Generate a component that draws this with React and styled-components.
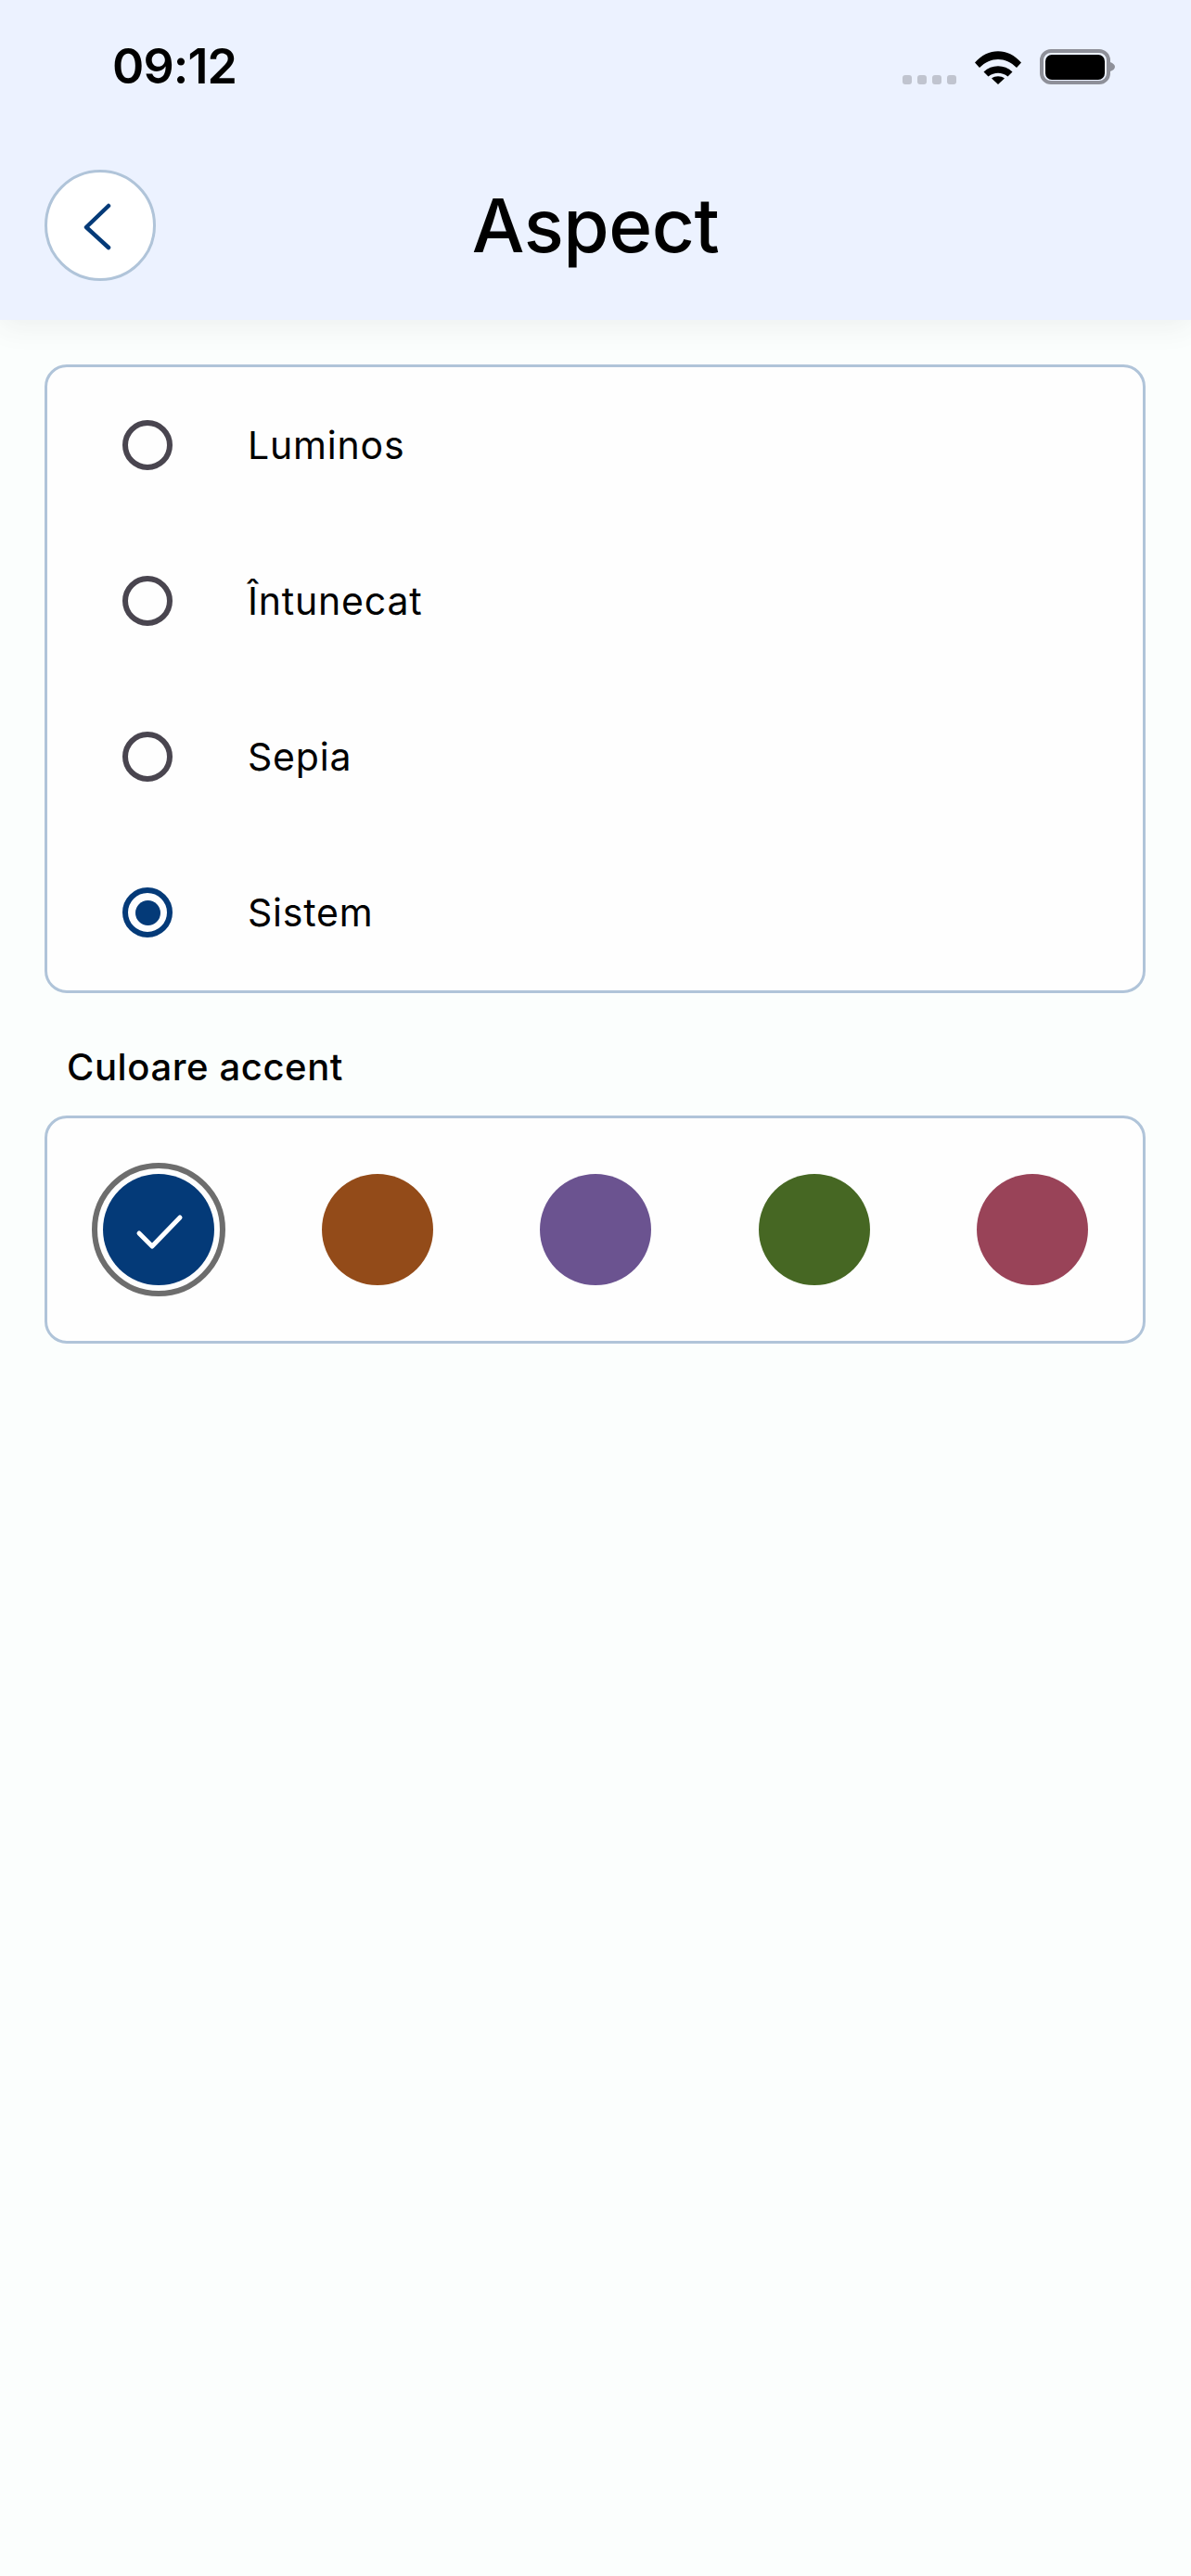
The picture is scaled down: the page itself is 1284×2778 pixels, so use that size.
import React from "react";
import styled, { createGlobalStyle } from "styled-components";

const GlobalStyle = createGlobalStyle`
  html, body {
    margin: 0;
    padding: 0;
    background: #fbfefd;
  }
  * {
    box-sizing: border-box;
  }
`;

const Page = styled.div`
  width: 1284px;
  height: 2778px;
  overflow: hidden;
  background: #fbfefd;
  color: #000;
  font-family: Inter, "Liberation Sans", sans-serif;
`;

const Header = styled.header`
  height: 345px;
  background: #ecf2ff;
  box-shadow: 0 6px 30px rgba(60, 70, 60, 0.08);
`;

const StatusBar = styled.div`
  height: 144px;
  padding: 44px 82px 0 121px;
  display: flex;
  justify-content: space-between;
`;

const Time = styled.span`
  font-size: 52px;
  line-height: 56px;
  font-weight: 600;
  letter-spacing: -0.9px;
`;

const StatusIcons = styled.div`
  height: 47px;
  padding-top: 9px;
  display: flex;
  align-items: flex-end;
  gap: 20px;
`;

const Signal = styled.div`
  display: flex;
  gap: 6px;
  span {
    width: 10px;
    height: 10px;
    border-radius: 3px;
    background: #c0c4cf;
  }
`;

const NavRow = styled.div`
  margin-top: 39px;
  padding: 0 48px;
  display: grid;
  grid-template-columns: 120px 1fr 120px;
  align-items: center;
`;

const BackButton = styled.button`
  width: 120px;
  height: 120px;
  padding: 0;
  border: 3px solid #b0c4d9;
  border-radius: 50%;
  background: #fff;
  display: flex;
  align-items: center;
  justify-content: center;
`;

const Title = styled.h1`
  margin: 0;
  text-align: center;
  font-size: 80px;
  line-height: 120px;
  font-weight: 500;
  letter-spacing: -0.5px;
`;

const Content = styled.main`
  padding: 48px 49px 0 48px;
`;

const Card = styled.section`
  border: 3px solid #b0c4d9;
  border-radius: 24px;
  background: #fefefe;
`;

const OptionRow = styled.label`
  height: 168px;
  padding-left: 81px;
  display: flex;
  align-items: center;
  gap: 81px;
`;

const Radio = styled.span`
  width: 54px;
  height: 54px;
  border-radius: 50%;
  border: 6px solid ${(p) => (p.$selected ? "#043a78" : "#49454f")};
  display: flex;
  align-items: center;
  justify-content: center;
  &::after {
    content: "";
    display: ${(p) => (p.$selected ? "block" : "none")};
    width: 27px;
    height: 27px;
    border-radius: 50%;
    background: #043a78;
  }
`;

const OptionLabel = styled.span`
  font-size: 41px;
  line-height: 50px;
  font-weight: 430;
  letter-spacing: 0.8px;
`;

const SectionLabel = styled.h2`
  margin: 55px 0 27px 24px;
  font-size: 40px;
  line-height: 50px;
  font-weight: 550;
  letter-spacing: 0.6px;
`;

const SwatchCard = styled(Card)`
  padding: 48px 47px 48px 48px;
  display: flex;
  justify-content: space-between;
`;

const SwatchSlot = styled.div`
  width: 144px;
  height: 144px;
  border-radius: 50%;
  border: 6px solid ${(p) => (p.$selected ? "#6d6d6d" : "transparent")};
  display: flex;
  align-items: center;
  justify-content: center;
`;

const Swatch = styled.div`
  width: 120px;
  height: 120px;
  border-radius: 50%;
  background: ${(p) => p.$color};
  display: flex;
  align-items: center;
  justify-content: center;
`;

const options = [
  { label: "Luminos" },
  { label: "Întunecat" },
  { label: "Sepia" },
  { label: "Sistem", selected: true },
];

const swatches = [
  { color: "#043a78", selected: true },
  { color: "#934b19" },
  { color: "#6b5390" },
  { color: "#466723" },
  { color: "#994358" },
];

const WifiIcon = () => (
  <svg width="50" height="37" viewBox="0 0 50 37">
    <path d="M0 13.500C14 -3 36 -3 50 13.500L45 19C33 7 17 7 5 19Z" fill="#000" />
    <path d="M9.500 23.500C18 15 32 15 40.500 23.500L35.500 28.500C29 23.500 21 23.500 14.500 28.500Z" fill="#000" />
    <path d="M18 30.500C22 27.500 28 27.500 32 30.500L25 37Z" fill="#000" />
  </svg>
);

const BatteryIcon = () => (
  <svg width="81" height="38" viewBox="0 0 81 38">
    <rect x="2" y="2" width="72" height="34" rx="10" fill="none" stroke="#8e9099" strokeWidth="4" />
    <rect x="6" y="6" width="64" height="27" rx="7" fill="#000" />
    <path d="M76 14C79 15 81 17 81 19C81 21 79 23 76 24Z" fill="#8e9099" />
  </svg>
);

const BackIcon = () => (
  <svg width="60" height="60" viewBox="0 0 60 60" fill="none">
    <path d="M39 9L15 32L39 54" stroke="#043a78" strokeWidth="4.500" strokeLinecap="round" strokeLinejoin="round" />
  </svg>
);

const CheckIcon = () => (
  <svg width="60" height="48" viewBox="0 0 60 48" fill="none">
    <path d="M9 28L23 42L53 11" stroke="#fff" strokeWidth="5" strokeLinecap="round" strokeLinejoin="round" />
  </svg>
);

export default function App() {
  return (
    <Page>
      <GlobalStyle />
      <Header>
        <StatusBar>
          <Time>09:12</Time>
          <StatusIcons>
            <Signal>
              <span />
              <span />
              <span />
              <span />
            </Signal>
            <WifiIcon />
            <BatteryIcon />
          </StatusIcons>
        </StatusBar>
        <NavRow>
          <BackButton aria-label="Înapoi">
            <BackIcon />
          </BackButton>
          <Title>Aspect</Title>
          <div />
        </NavRow>
      </Header>
      <Content>
        <Card>
          {options.map((o) => (
            <OptionRow key={o.label}>
              <Radio $selected={o.selected} />
              <OptionLabel>{o.label}</OptionLabel>
            </OptionRow>
          ))}
        </Card>
        <SectionLabel>Culoare accent</SectionLabel>
        <SwatchCard>
          {swatches.map((s) => (
            <SwatchSlot key={s.color} $selected={s.selected}>
              <Swatch $color={s.color}>{s.selected && <CheckIcon />}</Swatch>
            </SwatchSlot>
          ))}
        </SwatchCard>
      </Content>
    </Page>
  );
}
